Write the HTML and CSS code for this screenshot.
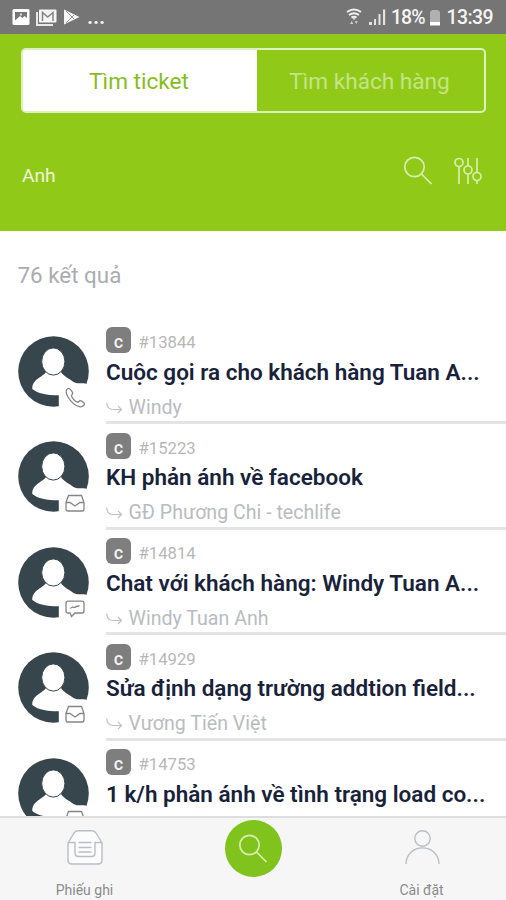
FILE: index.html
```
<!DOCTYPE html>
<html lang="vi">
<head>
<meta charset="utf-8">
<title>Tìm ticket</title>
<link rel="stylesheet" href="styles.css">
</head>
<body>
<svg class="defs" width="0" height="0" aria-hidden="true">
  <symbol id="avatar" viewBox="0 0 72 72">
    <circle cx="35.5" cy="35.5" r="35.3" fill="#37454d"/>
    <path d="M28 36C25 41 14 43 14.3 53C20 57.500 28 59.300 40.800 59.300V72H72V50L67.500 47.500C63 47 59 48 55.500 46C51 42 46 41 43 36Z" fill="#fff"/>
    <ellipse cx="35.300" cy="25.500" rx="11.600" ry="13.600" fill="#fff" stroke="#37454d" stroke-width="1"/>
  </symbol>
  <symbol id="phone" viewBox="0 0 24 24">
    <path d="M4 2.500C1.500 3.500 1.500 7 4 11C7 16 11 19.500 15.500 20.700C18 21.200 20.200 19.500 20.500 18C20.700 17 17 14.500 16 14.700C15 15 14.500 16.500 13.500 16.200C11 15.200 8.500 12.500 7.500 10C7.200 9 8.800 8.300 8.700 7.200C8.500 5.800 5.500 2 4 2.500Z"/>
  </symbol>
  <symbol id="mail" viewBox="0 0 24 24">
    <path d="M2 10.500L4.500 3.500H17.500L20 10.500V17Q20 19 18 19H4Q2 19 2 17ZM2 10.500H6L11 14L16 10.500H20"/>
  </symbol>
  <symbol id="chat" viewBox="0 0 24 24">
    <path d="M4 4.200H18Q20 4.200 20 6.200V14Q20 16 18 16H11L7.500 19.500L6 16H4Q2 16 2 14V6.200Q2 4.200 4 4.200ZM6.500 11.500C8.500 8.500 10 11.500 11.500 10S14 10 15.500 8.500"/>
  </symbol>
  <symbol id="reply" viewBox="0 0 17 12">
    <path d="M.7 .5C1 5 3.500 7.500 7 7.500H15.500M12 4L15.500 7.500L12 11"/>
  </symbol>
  <symbol id="search" viewBox="0 0 30 30">
    <circle cx="11.500" cy="11" r="9.700"/><path d="M18.500 18L28.500 28"/>
  </symbol>
</svg>
<div class="screen">
  <div class="status">
    <div class="status-left">
      <svg width="80" height="20" viewBox="0 0 80 20">
        <rect x=".5" y="1" width="17" height="16" rx="1.500" fill="#fff"/>
        <path d="M3 4H15V10L12.500 8L10.500 10L8 8L3 12.500Z" fill="#777"/><path d="M8 5.500h2v2H8z" fill="#ddd"/>
        <path d="M25 4V17H41" fill="none" stroke="#e8e8e8" stroke-width="2"/>
        <rect x="27" y="1.500" width="17.500" height="13" rx="1" fill="#f5f5f5"/>
        <path d="M30.500 13V4.500L35.700 9L41 4.500V13" fill="none" stroke="#858585" stroke-width="1.500"/>
        <path d="M52 1.500L67.500 9L52 16.500Z" fill="#f6f6f6"/><path d="M54 3L62 11M54 15L62 7" stroke="#969696" stroke-width="1"/>
      </svg>
      <span class="dots">...</span>
    </div>
    <div class="status-right">
      <svg width="40" height="20" viewBox="0 0 40 20">
        <g fill="none" stroke="#f0f0f0" stroke-width="2"><path d="M1 4Q8 -1 15 4M3 7Q8 3.500 13 7M5.500 9.700Q8 8 10.500 9.700"/></g>
        <path d="M6.500 10h3L8 12.500zM4 16l1.700-3L7.300 16zM8.700 13.200h3.200L10.300 16z" fill="#d0d0d0"/>
        <path d="M23 17v-3h3v3zM28 17v-6h2v6zM32.500 17V6h2v11zM37 17V1.500h2.200V17z" fill="#e2e2e2"/>
      </svg>
      <span class="percent">18%</span>
      <svg class="battery" width="12" height="18" viewBox="0 0 12 18">
        <path d="M1 16V3L3 1H9L11 3V16Z" fill="#b0b0b0"/><path d="M1 13H11V16.500H1Z" fill="#fff"/>
      </svg>
      <span class="clock">13:39</span>
    </div>
  </div>
  <header class="header">
    <div class="tabs">
      <div class="tab active"><span>Tìm ticket</span></div>
      <div class="tab"><span>Tìm khách hàng</span></div>
    </div>
    <div class="query">
      <span class="term">Anh</span>
      <svg class="line find" width="30" height="30"><use href="#search"/></svg>
      <svg class="line" width="28" height="28" viewBox="0 0 28 28">
        <path d="M5 1V1.500M5 9.500V27M14 1V9M14 17V27M23 1V15.500M23 23.500V27"/>
        <circle cx="5" cy="5.500" r="4"/><circle cx="14" cy="13" r="4"/><circle cx="23" cy="19.500" r="4"/>
      </svg>
    </div>
  </header>
  <main class="results">
    <div class="count">76 kết quả</div>
    <article class="item">
      <div class="avatar"><svg width="72" height="72"><use href="#avatar"/></svg><svg class="kind" width="24" height="24"><use href="#phone"/></svg></div>
      <div class="body">
        <div class="meta"><span class="badge">c</span><span class="id">#13844</span></div>
        <div class="title">Cuộc gọi ra cho khách hàng Tuan A...</div>
        <div class="by"><svg width="17" height="12"><use href="#reply"/></svg><span>Windy</span></div>
      </div>
    </article>
    <article class="item">
      <div class="avatar"><svg width="72" height="72"><use href="#avatar"/></svg><svg class="kind" width="24" height="24"><use href="#mail"/></svg></div>
      <div class="body">
        <div class="meta"><span class="badge">c</span><span class="id">#15223</span></div>
        <div class="title">KH phản ánh về facebook</div>
        <div class="by"><svg width="17" height="12"><use href="#reply"/></svg><span>GĐ Phương Chi - techlife</span></div>
      </div>
    </article>
    <article class="item">
      <div class="avatar"><svg width="72" height="72"><use href="#avatar"/></svg><svg class="kind" width="24" height="24"><use href="#chat"/></svg></div>
      <div class="body">
        <div class="meta"><span class="badge">c</span><span class="id">#14814</span></div>
        <div class="title">Chat với khách hàng: Windy Tuan A...</div>
        <div class="by"><svg width="17" height="12"><use href="#reply"/></svg><span>Windy Tuan Anh</span></div>
      </div>
    </article>
    <article class="item">
      <div class="avatar"><svg width="72" height="72"><use href="#avatar"/></svg><svg class="kind" width="24" height="24"><use href="#mail"/></svg></div>
      <div class="body">
        <div class="meta"><span class="badge">c</span><span class="id">#14929</span></div>
        <div class="title">Sửa định dạng trường addtion field...</div>
        <div class="by"><svg width="17" height="12"><use href="#reply"/></svg><span>Vương Tiến Việt</span></div>
      </div>
    </article>
    <article class="item">
      <div class="avatar"><svg width="72" height="72"><use href="#avatar"/></svg><svg class="kind" width="24" height="24"><use href="#mail"/></svg></div>
      <div class="body">
        <div class="meta"><span class="badge">c</span><span class="id">#14753</span></div>
        <div class="title">1 k/h phản ánh về tình trạng load co...</div>
      </div>
    </article>
  </main>
  <nav class="nav">
    <div class="nav-item">
      <svg width="38" height="38" viewBox="0 0 38 38">
        <path class="paper" d="M2 14L8 4Q9.500 1.700 12 1.700H26Q28.500 1.700 30 4L36 14V31Q36 35 32 35H6Q2 35 2 31Z"/>
        <path d="M2 13.500H9V24Q9 27.500 12.500 27.500H25.500Q29 27.500 29 24V13.500H36M12.500 13.500H25.500M12.500 18.500H25.500M12.500 23H25.500"/>
      </svg>
      <span>Phiếu ghi</span>
    </div>
    <div class="fab"><svg class="line" width="30" height="30"><use href="#search"/></svg></div>
    <div class="nav-item">
      <svg width="38" height="38" viewBox="0 0 38 38">
        <circle cx="19.500" cy="9.500" r="7.700"/><path d="M3 35C3.500 13.500 35.500 13.500 36 35"/>
      </svg>
      <span>Cài đặt</span>
    </div>
  </nav>
</div>
</body>
</html>
```
FILE: styles.css
```
* { box-sizing: border-box; }
body { margin: 0; font-family: Roboto, "Liberation Sans", sans-serif; background: #fff; }
.defs { position: absolute; }
svg { display: block; flex: none; }
.screen { width: 506px; height: 900px; display: flex; flex-direction: column; overflow: hidden; }

.status { height: 34px; flex: none; background: #757575; color: #f4f4f4; display: flex; justify-content: space-between; padding: 8px 13px 0 12px; }
.status-left, .status-right { display: flex; }
.dots { font-size: 22px; font-weight: 600; line-height: 18px; margin-left: -5px; letter-spacing: -.2px; }
.status-right span { font-size: 19.500px; line-height: 20px; font-weight: 500; }
.percent { margin-left: 5px; letter-spacing: -1px; }
.battery { margin: 1px 6px 0 4px; }
.clock { letter-spacing: -.6px; }

.header { height: 197px; flex: none; background: #91c919; padding: 14px 20px 0 21px; }
.tabs { height: 65px; display: flex; border: 2px solid #def1ba; border-radius: 5px; overflow: hidden; background: #91c919; }
.tab { flex: 1; display: flex; align-items: center; justify-content: center; font-size: 22.600px; color: #c5e486; padding-top: 2px; }
.tab.active { flex: none; width: 232px; background: #fff; color: #86be1b; box-shadow: 0 0 0 2px #fff; }
.query { display: flex; align-items: center; height: 30px; margin: 42px 4px 0 1px; color: #eef8d9; font-size: 19.200px; }
.term { flex: 1; padding-top: 10px; }
.line { fill: none; stroke: #d9eeb0; stroke-width: 1.700; }
.query .line { margin-top: 2px; }
.find { margin-right: 21px; }

.results { flex: 1; min-height: 0; overflow: hidden; }
.count { height: 87.500px; padding: 30px 0 0 17.500px; font-size: 22.400px; line-height: 28px; color: #a9adb0; }
.item { height: 105.500px; display: flex; padding-left: 18px; }
.avatar { width: 88px; padding-top: 17px; position: relative; flex: none; }
.kind { position: absolute; left: 46px; top: 67.500px; fill: none; stroke: #858585; stroke-width: 1.300; }
.body { flex: 1; min-width: 0; border-bottom: 3px solid #e4e4e4; padding-top: 8.500px; }
.meta { display: flex; height: 26px; }
.badge { width: 25px; height: 26px; border-radius: 6px; background: #7e7e7e; color: #f2f2f2; font-size: 18px; font-weight: 500; line-height: 29px; text-align: center; }
.id { font-size: 16.700px; line-height: 32px; color: #b7b7b7; margin-left: 7.500px; }
.title { font-size: 22.500px; line-height: 30px; margin-top: 3.500px; font-weight: 600; color: #18223a; white-space: nowrap; }
.by { display: flex; align-items: center; font-size: 19.600px; line-height: 26px; margin-top: 8px; color: #b9bcbf; }
.by svg { margin-right: 5.500px; fill: none; stroke: #bfc2c4; stroke-width: 1.200; }

.nav { height: 84px; flex: none; background: #f6f6f6; border-top: 2px solid #dedede; display: flex; justify-content: space-between; }
.nav-item { width: 169px; display: flex; flex-direction: column; align-items: center; padding-top: 11px; font-size: 14px; line-height: 18px; color: #8b8b8b; }
.nav-item svg { fill: none; stroke: #b9bec4; stroke-width: 1.400; }
.nav-item .paper { fill: #fcfcfc; }
.nav-item span { margin-top: 13.500px; }
.fab { width: 57px; height: 57px; margin-top: 2px; border-radius: 50%; background: #7fc31c; display: flex; align-items: center; justify-content: center; }
```
